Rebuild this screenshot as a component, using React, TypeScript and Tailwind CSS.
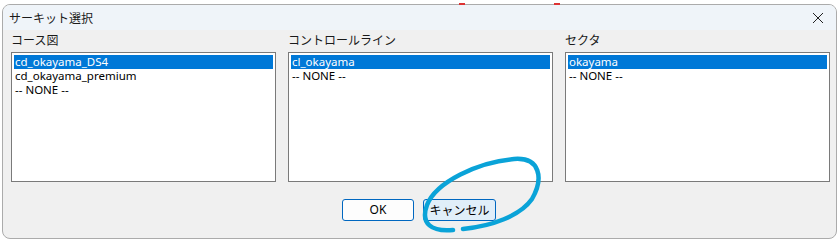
import React from 'react';

const jp = { fontFamily: '"Noto Sans CJK JP", "Noto Sans", sans-serif' };
const latin = { fontFamily: '"Noto Sans", "Noto Sans CJK JP", sans-serif' };

interface ListProps {
  label: string;
  items: string[];
}

const ListBox: React.FC<ListProps> = ({ label, items }) => (
  <div className="flex flex-col w-[265px]">
    <div className="h-[22px] text-[12px] leading-[16px] text-[#1a1a1a] pt-[2px]" style={jp}>
      {label}
    </div>
    <div className="h-[130px] bg-white border border-[#7a7a7a] p-[2px]">
      {items.map((item, i) => (
        <div
          key={item}
          className={
            i === 0
              ? 'h-[14px] px-[1px] text-[11.5px] leading-[14px] bg-[#0078d7] text-white overflow-hidden'
              : 'h-[14px] px-[1px] text-[11.5px] leading-[14px] text-black overflow-hidden'
          }
          style={latin}
        >
          {item}
        </div>
      ))}
    </div>
  </div>
);

export default function App() {
  return (
    <div className="relative w-[840px] h-[241px] bg-white overflow-hidden">
      <div className="ml-[2px] mt-[4px] w-[835px] h-[235px] border border-[#ababab] rounded-[8px] bg-[#f0f0f0] overflow-hidden flex flex-col">
        {/* Title bar */}
        <div className="h-[25px] bg-[#eff4f9] flex items-center justify-between pl-[6px] pr-[10px]">
          <span className="text-[12px] text-[#1a1a1a]" style={jp}>サーキット選択</span>
          <svg width="12" height="12" viewBox="0 0 12 12" className="mr-[2px]">
            <path d="M1 1 L11 11 M11 1 L1 11" stroke="#222" strokeWidth="1" />
          </svg>
        </div>
        {/* Content */}
        <div className="flex gap-[12px] pl-[8px]">
          <ListBox label="コース図" items={['cd_okayama_DS4', 'cd_okayama_premium', '-- NONE --']} />
          <ListBox label="コントロールライン" items={['cl_okayama', '-- NONE --']} />
          <ListBox label="セクタ" items={['okayama', '-- NONE --']} />
        </div>
        <div className="flex gap-[9px] pl-[339px] pt-[17px]">
          <button
            className="w-[72px] h-[22px] bg-[#fdfdfd] border border-[#0067c0] rounded-[3px] text-[12px] text-black flex items-center justify-center"
            style={latin}
          >
            OK
          </button>
          <button
            className="w-[73px] h-[22px] bg-[#e0eef9] border border-[#0067c0] rounded-[3px] text-[12px] text-black flex items-center justify-center"
            style={jp}
          >
            キャンセル
          </button>
        </div>
      </div>

      {/* small red marks */}
      <div className="absolute left-[459px] top-[3px] w-[6px] h-[2px] bg-[#d33]" />
      <div className="absolute left-[554px] top-[3px] w-[6px] h-[2px] bg-[#d33]" />

      {/* hand-drawn annotation */}
      <svg className="absolute inset-0 pointer-events-none" width="840" height="241">
        <path
          d="M453 230 C432 232, 420 224, 427 205 C436 182, 478 162, 514 159 C540 157, 544 178, 532 199 C520 216, 492 226, 463 229"
          fill="none"
          stroke="#0aa3d8"
          strokeWidth="4.5"
          strokeLinecap="round"
        />
      </svg>
    </div>
  );
}
